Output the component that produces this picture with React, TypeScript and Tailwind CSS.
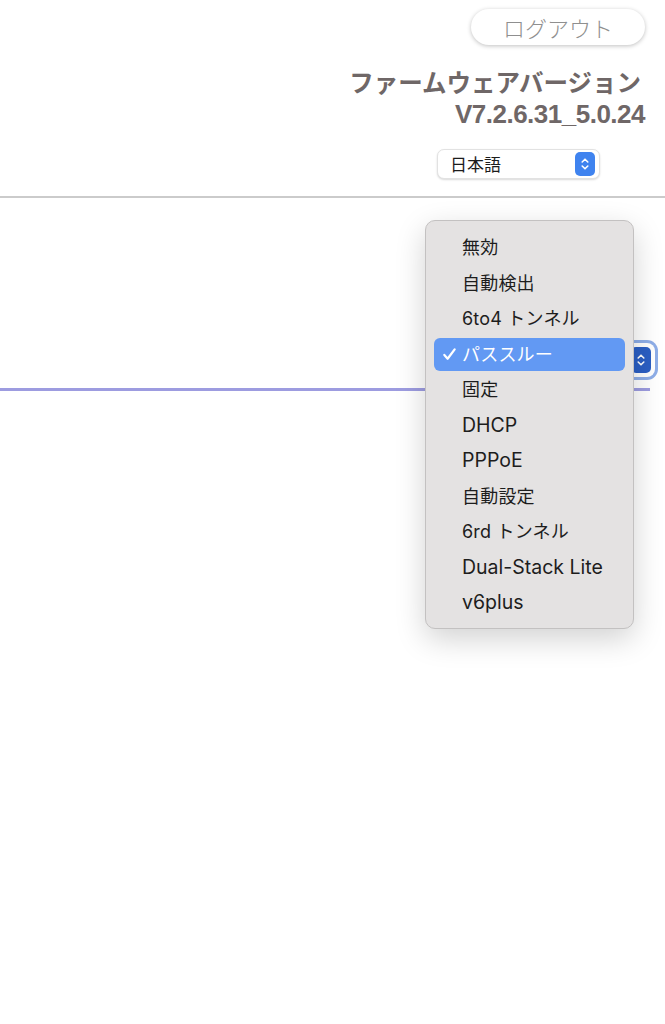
import React from "react";

const options = [
  "無効",
  "自動検出",
  "6to4 トンネル",
  "パススルー",
  "固定",
  "DHCP",
  "PPPoE",
  "自動設定",
  "6rd トンネル",
  "Dual-Stack Lite",
  "v6plus",
];

const Chevrons = ({ className }: { className?: string }) => (
  <svg viewBox="0 0 20 24" className={className} fill="none">
    <path d="M6.5 9.5 10 6l3.5 3.5" stroke="white" strokeWidth="2" strokeLinecap="round" strokeLinejoin="round" />
    <path d="M6.5 14.5 10 18l3.5-3.5" stroke="white" strokeWidth="2" strokeLinecap="round" strokeLinejoin="round" />
  </svg>
);

const Check = () => (
  <svg viewBox="0 0 16 16" className="w-[15px] h-[15px]" fill="none">
    <path d="M2.5 8.5 6 12.5 13.5 2.5" stroke="white" strokeWidth="2.4" strokeLinecap="round" strokeLinejoin="round" />
  </svg>
);

// latin-only labels look wider in the original font
const isLatin = (s: string) => /^[\x00-\x7f]+$/.test(s);

const App = () => {
  const selected = 3;
  return (
    <div className="relative min-h-screen bg-white font-['Inter','Noto_Sans_CJK_JP',sans-serif]">
      <header className="flex flex-col items-end pt-[9px]">
        <button className="mr-[20px] w-[174px] h-[36px] rounded-full bg-white shadow-[0_1px_4px_rgba(0,0,0,0.25)] text-[22px] font-light text-[#8f8f8f] font-['Noto_Sans_CJK_JP',sans-serif]">
          ログアウト
        </button>
        <h1 className="mt-[21px] mr-[24px] text-[24.5px] leading-[32px] font-bold text-[#6f6767] font-['Noto_Sans_CJK_JP',sans-serif]">
          ファームウェアバージョン
        </h1>
        <p className="mt-[1px] mr-[20px] text-[26px] leading-[30px] font-bold tracking-[-0.5px] text-[#6f6767] font-['Liberation_Sans',Arial,sans-serif]">
          V7.2.6.31_5.0.24
        </p>
        <div className="mt-[20px] mr-[65px] flex items-center justify-between w-[163px] h-[30px] rounded-[7px] bg-white border border-[#e2e2e2] shadow-[0_1px_2px_rgba(0,0,0,0.15)] pl-[12px] pr-[4px]">
          <span className="text-[17px] text-[#1c1c1c] font-['Noto_Sans_CJK_JP',sans-serif]">日本語</span>
          <span className="flex items-center justify-center w-[20px] h-[24px] rounded-[5px] bg-[#3f83ef]">
            <Chevrons className="w-[16px] h-[20px]" />
          </span>
        </div>
      </header>
      <div className="mt-[17px] h-[2px] bg-[#cbcbcb]" />

      <section className="pt-[145px]">
        <div className="flex justify-end pr-[10px]">
          <div className="flex items-center justify-end w-[220px] h-[34px] rounded-[8px] bg-white ring-[3px] ring-[#8eaee8] pr-[4px]">
            <span className="flex items-center justify-center w-[20px] h-[26px] rounded-[5px] bg-[#2b5fc4]">
              <Chevrons className="w-[16px] h-[20px]" />
            </span>
          </div>
        </div>
        <div className="mt-[11px] mr-[15px] h-[3px] bg-[#9d9ce0]" />
      </section>

      <div className="absolute left-[425px] top-[220px] w-[209px] rounded-[10px] border border-[#c3c1c1] bg-[#e4e2e2] pt-[9px] pb-[7px] shadow-[0_10px_30px_rgba(0,0,0,0.18)]">
        {options.map((o, i) => (
          <div key={o} className="h-[35.5px] px-[8px] py-[1.5px]">
            <div
              className={
                "flex items-center h-full rounded-[6px] " +
                (i === selected ? "bg-[#6299f3] text-white" : "text-[#1d1d1d]")
              }
            >
              <span className="w-[28px] flex justify-center pl-[2px]">
                {i === selected && <Check />}
              </span>
              <span className={isLatin(o) ? "text-[19.5px]" : "text-[18px] tracking-[0.2px]"}>{o}</span>
            </div>
          </div>
        ))}
      </div>
    </div>
  );
};

export default App;
